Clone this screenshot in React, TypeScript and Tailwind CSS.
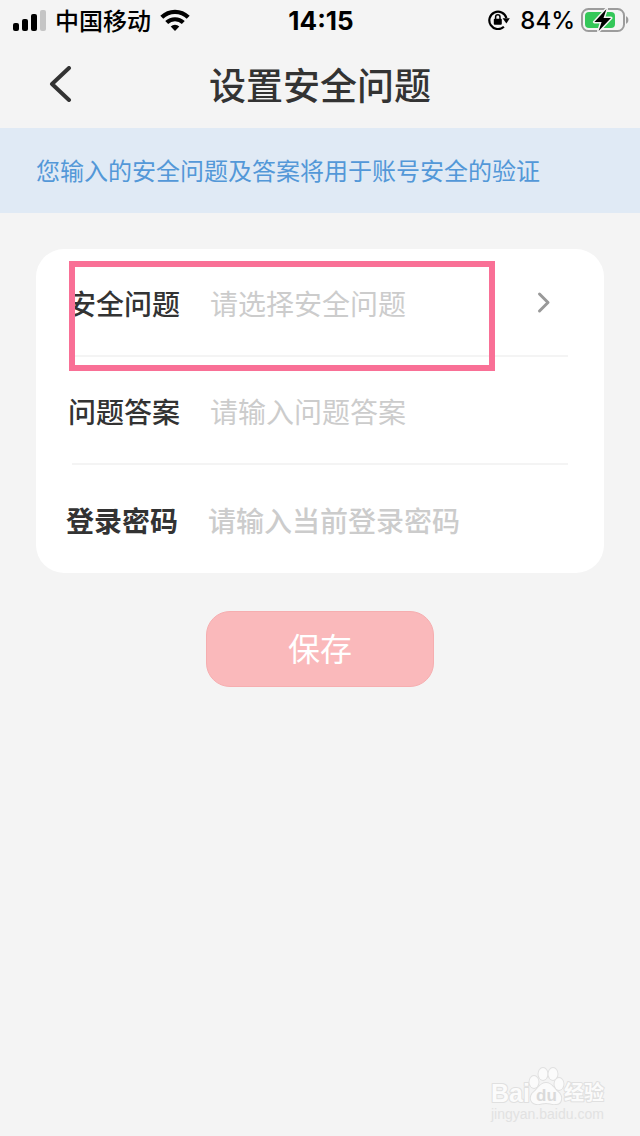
import { useState } from "react";

const questions = ["您的出生地是哪里", "您母亲的姓名是什么", "您的小学校名是什么"];

function SignalIcon() {
  return (
    <svg className="h-[21px] w-[33px]" viewBox="0 0 33 21" aria-hidden="true">
      <rect x="0" y="13" width="6" height="8" rx="2" />
      <rect x="9" y="9" width="6" height="12" rx="2" />
      <rect x="18" y="4" width="6" height="17" rx="2" />
      <rect x="27" y="0" width="6" height="21" rx="2" fill="#c5c5c5" />
    </svg>
  );
}

function WifiIcon() {
  return (
    <svg className="h-[22px] w-[30px]" viewBox="0 0 30 22" fill="none" stroke="#000" strokeWidth="4.200" aria-hidden="true">
      <path d="M1.800 8.300a18.800 18.800 0 0 1 26.400 0" />
      <path d="M6.700 13.600a11.900 11.900 0 0 1 16.600 0" />
      <path d="M15 22l-4.300-4.400a6.200 6.200 0 0 1 8.600 0z" fill="#000" stroke="none" />
    </svg>
  );
}

function RotationLockIcon() {
  return (
    <svg className="h-5 w-[22px]" viewBox="0 0 22 20" fill="none" stroke="#000" strokeWidth="2.200" aria-hidden="true">
      <path d="M15.900 16.800A8.700 8.700 0 1 1 18.400 8" />
      <path d="M14.600 8.300h7.200l-3.400 5.200z" fill="#000" stroke="none" />
      <rect x="5.800" y="8.800" width="8" height="6" rx="1" fill="#000" stroke="none" />
      <path d="M7.600 9V7a2.200 2.200 0 0 1 4.400 0v2" strokeWidth="1.500" />
    </svg>
  );
}

function BatteryIcon() {
  return (
    <svg className="h-6 w-12" viewBox="0 0 48 24" fill="none" aria-hidden="true">
      <rect x="1" y="1" width="42" height="22" rx="6.500" stroke="#9c9c9c" strokeWidth="2" />
      <path d="M45 8.200c3.200 1 3.200 6.600 0 7.600z" fill="#9c9c9c" />
      <rect x="4" y="4" width="30" height="16" rx="4" fill="#34c759" />
      <path
        d="M25.500 1L13.400 14h7.200l-3 9L30 10h-7.500z"
        fill="#000"
        stroke="#f4f4f4"
        strokeWidth="3"
        strokeLinejoin="round"
        paintOrder="stroke"
      />
    </svg>
  );
}

function Watermark() {
  return (
    <svg
      className="pointer-events-none absolute right-8 bottom-3 h-[60px] w-[120px] overflow-visible"
      viewBox="0 0 120 60"
      fill="#fbfbfb"
      stroke="#e0e0e0"
      strokeWidth="2"
      strokeLinejoin="round"
      paintOrder="stroke"
      aria-hidden="true"
    >
      <text x="3" y="38" className="font-['Liberation_Sans'] text-[25px] font-bold">Bai</text>
      <ellipse cx="46" cy="18" rx="4.500" ry="6" />
      <ellipse cx="55" cy="10" rx="4.500" ry="6" />
      <ellipse cx="65" cy="10" rx="4.500" ry="6" />
      <ellipse cx="71" cy="20" rx="4.500" ry="6" />
      <path d="M58 19c6 0 8 6 12 9 5 4 4 12-2 12-4 .6-6-1-10-1s-6 1.600-10 1c-6-1-7-8-2-12 4-3 6-9 12-9z" />
      <text x="48" y="37" className="font-['Liberation_Sans'] text-[17px] font-bold" fill="#dadada" stroke="none">du</text>
      <text x="76" y="36" className="font-['Noto_Sans_CJK_SC'] text-[20px] font-bold">经验</text>
      <text x="3" y="55" className="font-['Liberation_Sans'] text-[14px]" fill="#e2e2e2" stroke="none">jingyan.baidu.com</text>
    </svg>
  );
}

export default function App() {
  const [question, setQuestion] = useState("");
  const [answer, setAnswer] = useState("");
  const [password, setPassword] = useState("");

  return (
    <div className="relative min-h-screen bg-[#f4f4f4] font-['Noto_Sans_CJK_SC',sans-serif] text-[#333]">
      <div className="grid h-10 grid-cols-[1fr_auto_1fr] items-center pr-[11px] pl-[13px] text-2xl leading-8 font-medium text-black">
        <div className="flex items-center gap-[9px]">
          <SignalIcon />
          <span>中国移动</span>
          <WifiIcon />
        </div>
        <time className="pt-0.5 font-['Inter'] text-[26px] leading-8 font-bold">14:15</time>
        <div className="flex items-center justify-end font-['Inter']">
          <RotationLockIcon />
          <span className="mr-[6px] ml-[10px] pt-0.5">84%</span>
          <BatteryIcon />
        </div>
      </div>

      <header className="grid h-22 grid-cols-[1fr_auto_1fr] items-center">
        <button type="button" aria-label="返回" className="ml-12 w-6">
          <svg className="h-9 w-6" viewBox="0 0 24 36" fill="none" stroke="#333" strokeWidth="4" strokeLinecap="round" strokeLinejoin="round">
            <path d="M21 2L4 18l17 16" />
          </svg>
        </button>
        <h1 className="text-[37px] leading-none font-medium">设置安全问题</h1>
      </header>

      <p className="bg-[#e0eaf5] px-9 pt-[23px] pb-[25px] text-2xl leading-[37px] font-normal text-[#5398d8]">
        您输入的安全问题及答案将用于账号安全的验证
      </p>

      <form className="px-9 pt-9 text-[28px]" onSubmit={(e) => e.preventDefault()}>
        <div className="relative rounded-[28px] bg-white">
          <div className="flex h-[106px] items-center gap-[30px] pt-0.5 pr-12 pl-8">
            <label htmlFor="question" className="font-medium">安全问题</label>
            <div className="flex min-w-0 flex-1 items-center">
              <select
                id="question"
                className={`h-12 min-w-0 flex-1 appearance-none outline-none ${question ? "text-[#333]" : "text-[#ccc]"}`}
                value={question}
                onChange={(e) => setQuestion(e.target.value)}
              >
                <option value="">请选择安全问题</option>
                {questions.map((q) => (
                  <option key={q} value={q}>{q}</option>
                ))}
              </select>
              <svg className="h-6 w-6" viewBox="0 0 24 24" fill="none" stroke="#999" strokeWidth="3" strokeLinecap="round" strokeLinejoin="round" aria-hidden="true">
                <path d="M7.500 3l8.500 8.500-8.500 8.500" />
              </svg>
            </div>
          </div>
          <div className="mx-9 h-[2px] bg-[#f4f4f4]" />
          <div className="flex h-[106px] items-center gap-[30px] pt-0.5 pr-9 pl-8">
            <label htmlFor="answer" className="font-medium">问题答案</label>
            <input
              id="answer"
              className="h-12 min-w-0 flex-1 outline-none placeholder:text-[#ccc]"
              placeholder="请输入问题答案"
              value={answer}
              onChange={(e) => setAnswer(e.target.value)}
            />
          </div>
          <div className="mx-9 h-[2px] bg-[#f4f4f4]" />
          <div className="flex h-27 items-center gap-[30px] pt-0.5 pr-9 pl-[30px]">
            <label htmlFor="password" className="font-bold">登录密码</label>
            <input
              id="password"
              type="password"
              className="h-12 min-w-0 flex-1 font-medium outline-none placeholder:text-[#ccc]"
              placeholder="请输入当前登录密码"
              value={password}
              onChange={(e) => setPassword(e.target.value)}
            />
          </div>

          {/* highlight over the question row */}
          <div className="pointer-events-none absolute top-3 right-[109px] left-[33px] h-[110px] border-[6px] border-[#f97096]" />
        </div>

        <button
          type="submit"
          className="mx-auto mt-[38px] block h-19 w-57 rounded-3xl border border-[#f6aeb0] bg-[#fab9bb] pb-1 text-[32px] leading-none font-normal text-white"
        >
          保存
        </button>
      </form>

      <Watermark />
    </div>
  );
}
